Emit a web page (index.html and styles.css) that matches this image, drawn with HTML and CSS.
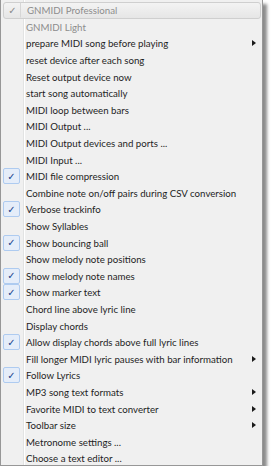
FILE: index.html
```html
<!DOCTYPE html>
<html lang="en">

<head>
  <meta charset="UTF-8" />
  <title>GNMIDI menu</title>
  <link rel="stylesheet" href="styles.css">
</head>

<body>
  <!-- Options menu -->
  <ul class="menu">
    <li class="item disabled hot"><span class="check">&#10003;</span><span class="label">GNMIDI Professional</span></li>
    <li class="item disabled"><span class="check"></span><span class="label">GNMIDI Light</span></li>
    <li class="item sub"><span class="check"></span><span class="label">prepare MIDI song before playing</span></li>
    <li class="item"><span class="check"></span><span class="label">reset device after each song</span></li>
    <li class="item"><span class="check"></span><span class="label">Reset output device now</span></li>
    <li class="item"><span class="check"></span><span class="label">start song automatically</span></li>
    <li class="item"><span class="check"></span><span class="label">MIDI loop between bars</span></li>
    <li class="item"><span class="check"></span><span class="label">MIDI Output ...</span></li>
    <li class="item"><span class="check"></span><span class="label">MIDI Output devices and ports ...</span></li>
    <li class="item"><span class="check"></span><span class="label">MIDI Input ...</span></li>
    <li class="item checked"><span class="check">&#10003;</span><span class="label">MIDI file compression</span></li>
    <li class="item"><span class="check"></span><span class="label">Combine note on/off pairs during CSV conversion</span></li>
    <li class="item checked"><span class="check">&#10003;</span><span class="label">Verbose trackinfo</span></li>
    <li class="item"><span class="check"></span><span class="label">Show Syllables</span></li>
    <li class="item checked"><span class="check">&#10003;</span><span class="label">Show bouncing ball</span></li>
    <li class="item"><span class="check"></span><span class="label">Show melody note positions</span></li>
    <li class="item checked"><span class="check">&#10003;</span><span class="label">Show melody note names</span></li>
    <li class="item checked"><span class="check">&#10003;</span><span class="label">Show marker text</span></li>
    <li class="item"><span class="check"></span><span class="label">Chord line above lyric line</span></li>
    <li class="item"><span class="check"></span><span class="label">Display chords</span></li>
    <li class="item checked"><span class="check">&#10003;</span><span class="label">Allow display chords above full lyric lines</span></li>
    <li class="item sub"><span class="check"></span><span class="label">Fill longer MIDI lyric pauses with bar information</span></li>
    <li class="item checked"><span class="check">&#10003;</span><span class="label">Follow Lyrics</span></li>
    <li class="item sub"><span class="check"></span><span class="label">MP3 song text formats</span></li>
    <li class="item sub"><span class="check"></span><span class="label">Favorite MIDI to text converter</span></li>
    <li class="item sub"><span class="check"></span><span class="label">Toolbar size</span></li>
    <li class="item"><span class="check"></span><span class="label">Metronome settings ...</span></li>
    <li class="item"><span class="check"></span><span class="label">Choose a text editor ...</span></li>
  </ul>
</body>

</html>
```

FILE: styles.css
```css
/* Reset */
* {
  margin: 0;
  padding: 0;
  box-sizing: border-box;
}

body {
  background: #ffffff;
  font-family: 'Lato', 'Open Sans', sans-serif;
  font-size: 9.7px;
  color: #1e1e1e;
}

/* Menu box */
.menu {
  list-style: none;
  width: 263px;
  height: 466px;
  padding-top: 2px;
  background: #f0f0f0;
  border: 1px solid #979797;
  border-top: none;
  box-shadow: 4px 4px 3px rgba(0, 0, 0, 0.45);
  position: relative;
}

/* Gutter line between check column and labels */
.menu::before {
  content: "";
  position: absolute;
  top: 0;
  bottom: 0;
  left: 22px;
  width: 1px;
  background: #e2e3e3;
  border-right: 1px solid #ffffff;
}

.item {
  height: 16.6px;
  display: flex;
  align-items: center;
  padding: 0 3px 0 2px;
  position: relative;
  white-space: nowrap;
}

.item .label {
  margin-left: 6px;
}

.check {
  width: 17px;
  height: 16px;
  display: flex;
  align-items: center;
  justify-content: center;
  font-family: 'DejaVu Sans', sans-serif;
  font-size: 10px;
  border: 1px solid transparent;
  border-radius: 2px;
  flex-shrink: 0;
  position: relative;
  z-index: 1;
}

.checked .check {
  background: #e5edf9;
  border-color: #aecbf0;
  color: #1b3f8c;
  font-weight: bold;
}

.disabled {
  color: #8d8d8d;
}

/* Highlighted (hot) row */
.hot {
  margin: 0 1px 0 2px;
  padding-left: 0;
  background: linear-gradient(#f3f3f3, #e6e6e6);
  border: 1px solid #cfcfcf;
  border-radius: 3px;
}

.hot .check {
  color: #8a8a8a;
  border-right-color: #d6d6d6;
  border-radius: 0;
}

/* Submenu arrow */
.sub::after {
  content: "";
  position: absolute;
  right: 6px;
  top: 50%;
  margin-top: -3px;
  border-left: 4px solid #1a1a1a;
  border-top: 3px solid transparent;
  border-bottom: 3px solid transparent;
}
```
